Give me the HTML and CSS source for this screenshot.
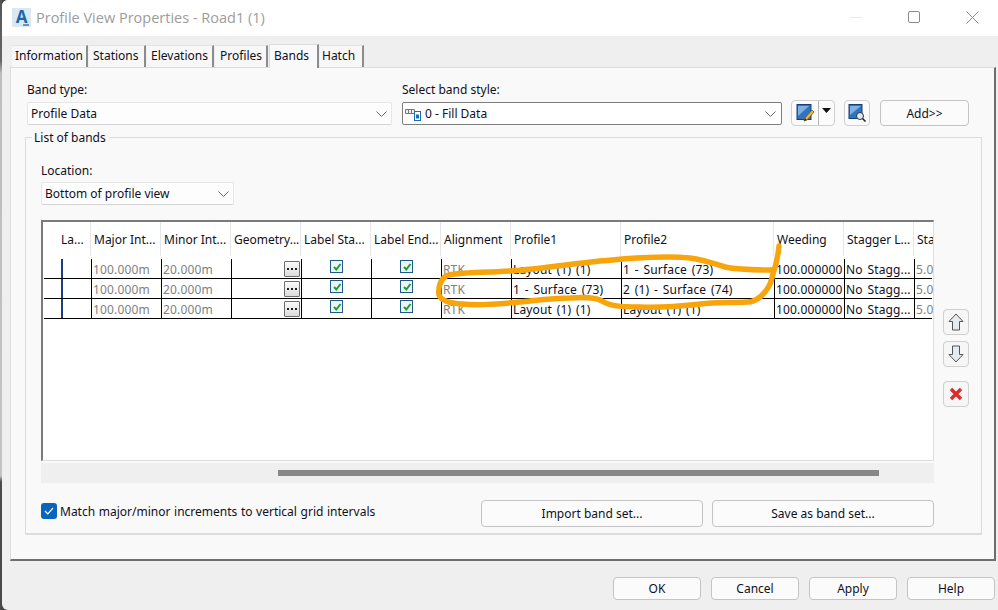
FILE: index.html
```html
<!DOCTYPE html>
<html lang="en">
<head>
<meta charset="utf-8">
<title>Profile View Properties</title>
<link rel="stylesheet" href="styles.css">
</head>
<body>
<div class="window">
  <div class="edge"></div>
  <div class="dialog">
    <header class="titlebar">
      <span class="app-icon">A</span>
      <span class="title">Profile View Properties - Road1 (1)</span>
      <div class="winctl">
        <svg width="12" height="12" viewBox="0 0 12 12"><path d="M0 6.500h12" stroke="#e8e8e8" fill="none"/></svg>
        <svg width="12" height="12" viewBox="0 0 12 12"><rect x=".5" y=".5" width="11" height="11" rx="1.500" fill="none" stroke="#8a8a8a"/></svg>
        <svg width="13" height="13" viewBox="0 0 13 13"><path d="M.5.5l12 12M12.500.5l-12 12" stroke="#8a8a8a" fill="none"/></svg>
      </div>
    </header>

    <nav class="tabs">
      <span class="tab t-info">Information</span>
      <span class="tab t-stat">Stations</span>
      <span class="tab t-elev">Elevations</span>
      <span class="tab t-prof">Profiles</span>
      <span class="tab t-band active">Bands</span>
      <span class="tab t-hatch">Hatch</span>
    </nav>

    <main class="panel">
      <div class="top-row">
        <div class="field f-type">
          <label class="lbl">Band type:</label>
          <div class="combo flat">Profile Data<svg class="chev" width="11" height="6" viewBox="0 0 11 6"><path d="M.5.5l5 5 5-5" fill="none" stroke="#666"/></svg></div>
        </div>
        <div class="field f-style">
          <label class="lbl">Select band style:</label>
          <div class="combo boxed">
            <svg class="style-icon" width="16" height="14" viewBox="0 0 16 14"><path d="M.5 2.500h9v4h-9zM3.500 2.500v4M6.500 2.500v4" fill="#eee" stroke="#777"/><rect x="9.500" y="4.500" width="6" height="9" fill="#fff" stroke="#1c6cb5"/><rect x="11" y="7.500" width="3" height="4" fill="#1c6cb5"/></svg>
            <span>0 - Fill Data</span>
            <svg class="chev" width="11" height="6" viewBox="0 0 11 6"><path d="M.5.5l5 5 5-5" fill="none" stroke="#666"/></svg>
          </div>
        </div>
        <div class="split">
          <span class="split-main">
            <svg width="20" height="20" viewBox="0 0 20 20"><rect x="2" y="1.500" width="14" height="15" fill="#2f74c0" stroke="#123f7a"/><path d="M3 13V3h11z" fill="#7fb0e2"/><path d="M9 18l1-3 7-8 2 2-7 8z" fill="#f2b632" stroke="#7a5a14" stroke-width=".8"/><path d="M9 18l1-3 2 2z" fill="#333"/></svg>
          </span>
          <span class="split-arrow"><svg width="9" height="5" viewBox="0 0 9 5"><path d="M0 0h9L4.500 5z" fill="#111"/></svg></span>
        </div>
        <span class="iconbtn find">
          <svg width="20" height="20" viewBox="0 0 20 20"><rect x="2" y="1.500" width="13" height="14" fill="#2f74c0" stroke="#123f7a"/><path d="M3 12V3h11z" fill="#7fb0e2"/><circle cx="13" cy="13" r="3.500" fill="#dfe8f0" stroke="#333"/><path d="M15.500 15.500l3 3" stroke="#222" stroke-width="1.600"/></svg>
        </span>
        <button class="btn add">Add&gt;&gt;</button>
      </div>

      <fieldset class="group">
        <legend>List of bands</legend>
        <div class="group-in">
          <label class="lbl loc-lbl">Location:</label>
          <div class="combo flat loc">Bottom of profile view<svg class="chev" width="11" height="6" viewBox="0 0 11 6"><path d="M.5.5l5 5 5-5" fill="none" stroke="#666"/></svg></div>

          <div class="grid-row">
            <div class="grid">
              <div class="row head">
                <span class="c"></span><span class="c tight">La...</span><span class="c">Major Int...</span><span class="c">Minor Int...</span><span class="c">Geometry...</span><span class="c">Label Sta...</span><span class="c">Label End...</span><span class="c">Alignment</span><span class="c">Profile1</span><span class="c">Profile2</span><span class="c">Weeding</span><span class="c">Stagger L...</span><span class="c">Sta</span>
              </div>
              <div class="row body">
                <span class="c first"></span><span class="c mark"></span><span class="c dim">100.000m</span><span class="c dim">20.000m</span><span class="c end"><span class="dots"><i></i><i></i><i></i></span></span><span class="c mid"><span class="chk"><svg width="10" height="10" viewBox="0 0 10 10"><path d="M2 5l2.300 2.500L8.500 2" fill="none" stroke="#18a038" stroke-width="2"/></svg></span></span><span class="c mid"><span class="chk"><svg width="10" height="10" viewBox="0 0 10 10"><path d="M2 5l2.300 2.500L8.500 2" fill="none" stroke="#18a038" stroke-width="2"/></svg></span></span><span class="c dim">RTK</span><span class="c">Layout (1) (1)</span><span class="c">1 - Surface (73)</span><span class="c">100.000000</span><span class="c">No Stagg...</span><span class="c dim">5.0</span>
              </div>
              <div class="row body">
                <span class="c first"></span><span class="c mark"></span><span class="c dim">100.000m</span><span class="c dim">20.000m</span><span class="c end"><span class="dots"><i></i><i></i><i></i></span></span><span class="c mid"><span class="chk"><svg width="10" height="10" viewBox="0 0 10 10"><path d="M2 5l2.300 2.500L8.500 2" fill="none" stroke="#18a038" stroke-width="2"/></svg></span></span><span class="c mid"><span class="chk"><svg width="10" height="10" viewBox="0 0 10 10"><path d="M2 5l2.300 2.500L8.500 2" fill="none" stroke="#18a038" stroke-width="2"/></svg></span></span><span class="c dim">RTK</span><span class="c">1 - Surface (73)</span><span class="c">2 (1) - Surface (74)</span><span class="c">100.000000</span><span class="c">No Stagg...</span><span class="c dim">5.0</span>
              </div>
              <div class="row body">
                <span class="c first"></span><span class="c mark"></span><span class="c dim">100.000m</span><span class="c dim">20.000m</span><span class="c end"><span class="dots"><i></i><i></i><i></i></span></span><span class="c mid"><span class="chk"><svg width="10" height="10" viewBox="0 0 10 10"><path d="M2 5l2.300 2.500L8.500 2" fill="none" stroke="#18a038" stroke-width="2"/></svg></span></span><span class="c mid"><span class="chk"><svg width="10" height="10" viewBox="0 0 10 10"><path d="M2 5l2.300 2.500L8.500 2" fill="none" stroke="#18a038" stroke-width="2"/></svg></span></span><span class="c dim">RTK</span><span class="c">Layout (1) (1)</span><span class="c">Layout (1) (1)</span><span class="c">100.000000</span><span class="c">No Stagg...</span><span class="c dim">5.0</span>
              </div>
            </div>
            <div class="side">
              <span class="iconbtn small"><svg width="16" height="18" viewBox="0 0 16 18"><path d="M8 1l7 7.500h-3.500V17h-7V8.500H1z" fill="#e6ebf0" stroke="#555"/></svg></span>
              <span class="iconbtn small"><svg width="16" height="18" viewBox="0 0 16 18"><path d="M8 17l7-7.500h-3.500V1h-7v8.500H1z" fill="#e6ebf0" stroke="#555"/></svg></span>
              <span class="iconbtn small del"><svg width="14" height="14" viewBox="0 0 14 14"><path d="M2 2l10 10M12 2L2 12" stroke="#dc2b2b" stroke-width="3.400" fill="none"/></svg></span>
            </div>
          </div>

          <div class="hscroll"><span class="thumb"></span></div>

          <div class="bottom-row">
            <span class="bluechk"><svg width="10" height="8" viewBox="0 0 10 8"><path d="M1 4l2.800 2.800L9 1" fill="none" stroke="#fff" stroke-width="1.200"/></svg></span>
            <span class="match">Match major/minor increments to vertical grid intervals</span>
            <button class="btn wide">Import band set...</button>
            <button class="btn wide">Save as band set...</button>
          </div>
        </div>
      </fieldset>
    </main>

    <footer class="actions">
      <button class="btn act">OK</button>
      <button class="btn act">Cancel</button>
      <button class="btn act">Apply</button>
      <button class="btn act">Help</button>
    </footer>
  </div>

  <svg class="scribble" width="998" height="610" viewBox="0 0 998 610"><path d="M779 246C778 256 775 268 773 274C771 282 770 286 765 292C760 298 755 302 747 302C730 303 717 302 700 304C682 306 665 308 640 307C620 307 610 306 602 301C595 297 585 297 570 298C555 298 540 300 520 302C500 304 480 306 462 304C450 303 441 301 439 295C438 288 440 280 446 276C455 272 480 273 510 271C540 269 570 264 600 261C630 258 665 255 690 258C705 260 712 263 725 267C740 270 755 270 773 270" fill="none" stroke="#f7a50a" stroke-width="5.500" stroke-linecap="round" stroke-linejoin="round"/></svg>
</div>
</body>
</html>
```

FILE: styles.css
```css
* { box-sizing: border-box; }
html, body { margin: 0; padding: 0; }
body {
  width: 998px;
  height: 610px;
  overflow: hidden;
  font: 12px/15px "Noto Sans", Tahoma, sans-serif;
  color: #10101c;
  background: #efefef;
}
.window {
  position: relative;
  display: flex;
  width: 998px;
  height: 610px;
  background: #444;
}
.edge { width: 2px; flex: none; background: linear-gradient(#555 0, #666 10%, #bdbdbd 12%, #c4c4c4 78%, #4a4a4a 79%, #4a4a4a 100%); }
.dialog {
  flex: 1;
  display: flex;
  flex-direction: column;
  background: #efefef;
  border-radius: 6px 0 0 6px;
}

.titlebar {
  height: 36px;
  flex: none;
  display: flex;
  align-items: center;
  background: #fff;
  padding-left: 10px;
  border-top-left-radius: 6px;
}
.app-icon {
  position: relative;
  flex: none;
  width: 19px;
  height: 19px;
  margin-top: -2px;
  background: #dbe8f2;
  color: #166aab;
  font: 700 17px/17px "Open Sans", sans-serif;
  text-align: center;
}
.app-icon::after {
  content: "";
  position: absolute;
  right: 2px;
  bottom: 1px;
  width: 6px;
  height: 2px;
  background: #6f94b3;
}
.title {
  margin-left: 5px;
  font: 14.500px/20px "Open Sans", sans-serif;
  color: #9c9c9c;
  margin-top: -1px;
}
.winctl {
  margin-left: auto;
  display: flex;
  align-items: center;
  gap: 46px;
  padding-right: 19px;
  margin-top: -2px;
}

.tabs {
  height: 31px;
  flex: none;
  display: flex;
  align-items: flex-end;
  padding-left: 10px;
}
.tab {
  height: 22px;
  padding: 2px 0 0 4px;
  background: #f7f7f7;
  border-top: 1px solid #e4e4e4;
  border-right: 2px solid #8c8c8c;
  margin-right: 1px;
}
.t-info { width: 76px; padding-left: 3px; }
.t-stat { width: 57px; }
.t-elev { width: 67px; }
.t-prof { width: 53px; padding-left: 5px; }
.t-band { width: 50px; padding-left: 4px; }
.t-hatch { width: 44px; padding-left: 2px; }
.tab.active {
  height: 24px;
  padding-top: 3px;
  background: #f9f9f9;
  border-top: 1px solid #dcdcdc;
  border-left: 1px solid #dcdcdc;
  margin-bottom: -1px;
  position: relative;
}

.panel {
  margin-left: 8px;
  width: 986px;
  height: 494px;
  flex: none;
  background: #f9f9f9;
  border-top: 1px solid #dcdcdc;
  border-left: 1px solid #dcdcdc;
  border-right: 2px solid #6e6e6e;
  border-bottom: 2px solid #6e6e6e;
  padding: 13px 0 0 14px;
}
.top-row {
  display: flex;
  align-items: flex-end;
  height: 44px;
  padding-left: 2px;
}
.lbl { display: block; height: 15px; }
.field { display: flex; flex-direction: column; gap: 5px; }
.f-type { width: 365px; margin-right: 10px; }
.f-style { width: 380px; margin-right: 9px; }
.combo {
  display: flex;
  align-items: center;
  height: 23px;
  padding-left: 3px;
  position: relative;
}
.combo .chev { margin-left: auto; margin-right: 4px; }
.flat { background: #fdfdfd; border: 1px solid #e6e6e6; border-bottom-color: #d4d4d4; border-radius: 2px; }
.boxed { background: #fff; border: 1px solid #7e7e7e; border-radius: 2px; padding-left: 2px; gap: 4px; }
.boxed .chev { margin-right: 5px; }
.style-icon { flex: none; }

.split {
  display: flex;
  width: 44px;
  height: 26px;
  background: #fbfbfb;
  border: 1px solid #cfcfcf;
  border-radius: 4px;
  margin-bottom: -1px;
  margin-right: 9px;
}
.split-main { width: 27px; display: flex; align-items: center; justify-content: center; border-right: 1px solid #b5b5b5; }
.split-arrow { flex: 1; display: flex; justify-content: center; padding-top: 7px; }
.iconbtn {
  display: flex;
  align-items: center;
  justify-content: center;
  background: #fbfbfb;
  border: 1px solid #cfcfcf;
  border-radius: 4px;
}
.find { width: 26px; height: 26px; margin-bottom: -1px; margin-right: 10px; }
.btn {
  font: inherit;
  color: inherit;
  background: #fbfbfb;
  border: 1px solid #c4c4c4;
  border-radius: 4px;
  padding: 0;
  text-align: center;
}
.add { width: 89px; height: 26px; margin-bottom: -1px; }

.group {
  margin: 4px 0 0 0;
  padding: 0;
  width: 957px;
  height: 406px;
  border: 1px solid #dcdcdc;
  border-width: 1px 1px 2px 1px;
  min-width: 0;
}
.group legend {
  margin-left: 6px;
  padding: 1px 3px 0 2px;
  line-height: 15px;
}
.group-in { padding: 18px 0 0 15px; }
.loc { width: 193px; margin-top: 4px; }

.grid-row { display: flex; margin-top: 15px; }
.grid {
  width: 893px;
  height: 241px;
  flex: none;
  background: #fff;
  border-top: 2px solid #7a7a7a;
  border-left: 2px solid #7a7a7a;
  border-right: 1px solid #dedede;
  border-bottom: 1px solid #dedede;
  overflow: hidden;
}
.row {
  display: grid;
  grid-template-columns: 18px 30px 70px 70px 70px 70px 70px 70px 110px 153px 70px 70px 20px;
  white-space: nowrap;
}
.head { height: 37px; }
.head .c { height: 34px; padding: 10px 0 0 3px; border-right: 1px solid #e6e6e6; overflow: hidden; }
.head .tight { padding-left: 0; }
.head .c:first-child { border-right: 0; }
.head .c:last-child { border-right: 0; }
.body { height: 20px; margin-left: 1px; border-bottom: 1px solid #000; width: 888px; grid-template-columns: 17px 30px 70px 70px 70px 70px 70px 70px 110px 153px 70px 70px 19px; }
.body .c { height: 19px; padding: 3px 0 0 1px; border-left: 1px solid #000; overflow: hidden; line-height: 15px; letter-spacing: .15px; word-spacing: 1.500px; }
.body .first { border-left: 0; }
.body .mark { border-left: 2px solid #1b3d86; }
.dim { color: #808080; }
.body .end { display: flex; justify-content: flex-end; padding: 2px 1px 0 0; }
.body .mid { display: flex; justify-content: center; padding: 1px 0 0 0; }
.dots {
  display: flex;
  align-items: center;
  justify-content: center;
  gap: 2px;
  width: 16px;
  height: 16px;
  border: 1px solid #6d6d6d;
  background: linear-gradient(#fafafa, #dcdcdc);
  border-radius: 1px;
}
.dots i { width: 2px; height: 2px; background: #222; }
.chk {
  display: flex;
  align-items: center;
  justify-content: center;
  width: 13px;
  height: 13px;
  border: 1px solid #1f5a8c;
  background: #f1f4f6;
}

.side {
  display: flex;
  flex-direction: column;
  padding: 89px 0 0 9px;
}
.small { width: 26px; height: 26px; margin-bottom: 6px; background: #f6f6f6; }
.small.del { margin-top: 8px; }

.hscroll {
  width: 893px;
  height: 20px;
  margin-top: 2px;
  padding: 7px 0 0 237px;
  background: #efefef;
}
.thumb { display: block; width: 601px; height: 6px; background: #878787; }

.bottom-row {
  display: flex;
  align-items: center;
  width: 893px;
  height: 27px;
  margin-top: 17px;
}
.bluechk {
  display: flex;
  align-items: center;
  justify-content: center;
  width: 16px;
  height: 16px;
  flex: none;
  background: #0b63c0;
  border-radius: 3px;
  margin-top: -6px;
}
.match { margin-left: 3px; margin-right: auto; margin-top: -4px; word-spacing: .5px; }
.wide { width: 222px; height: 27px; margin-left: 9px; }
.wide:first-of-type { margin-left: 0; }

.actions {
  display: flex;
  justify-content: flex-end;
  gap: 10px;
  padding: 16px 3px 0 0;
}
.act { width: 88px; height: 23px; }

.scribble { position: absolute; left: 0; top: 0; pointer-events: none; }
```
